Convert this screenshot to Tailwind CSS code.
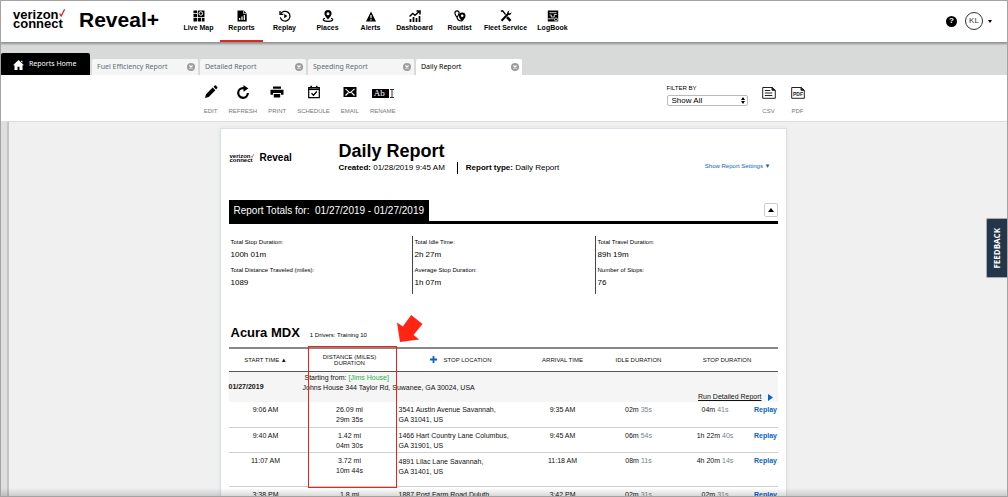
<!DOCTYPE html>
<html lang="en">
  <head>
    <meta charset="UTF-8" />
    <title>Reveal+ | Daily Report</title>
    <meta name="viewport" content="width=device-width, initial-scale=1.0" />
    <script src="https://cdn.jsdelivr.net/npm/@tailwindcss/browser@4"></script>
  </head>
  <body class="relative h-screen flex flex-col overflow-hidden border border-[#a3a3a3] bg-[#f0f0f0] font-['Liberation_Sans',Arial,sans-serif] text-black">
    <!-- Header -->
    <header class="relative z-10 flex shrink-0 h-[41px] bg-white shadow-[0_1px_2px_1px_#8f9190]">
      <a href="#" class="block ml-3 mt-[9px] w-[66px] text-[13px] leading-[9px] font-bold">
        <span class="flex items-start">verizon
          <svg class="w-[6px] h-[8px] -mt-px" viewBox="0 0 6 8" fill="none" stroke="#e0261c" stroke-width="1.3"><path d="M.6 4.6 2.2 7 5.6.4" /></svg>
        </span>
        <span class="block">connect</span>
      </a>
      <h1 class="w-[98px] mt-[7px] text-[21px] leading-6 font-bold">Reveal+</h1>

      <nav class="flex text-[7px] leading-2 font-bold text-center">
        <a href="#" class="flex flex-col items-center w-[43px] pt-[9px] gap-[2px] whitespace-nowrap">
          <svg class="size-3" viewBox="0 0 12 12"><path d="M.5.5h11v11H.5z" /><path d="M0 7.5h12M4.5 0v12M8.5 7.5V12M0 3.5h4" stroke="#fff" stroke-width=".8" /><circle cx="7.8" cy="3.5" r="1.8" fill="none" stroke="#fff" /></svg>
          Live Map
        </a>
        <a href="#" aria-current="page" class="flex flex-col items-center w-[43px] pt-[9px] gap-[2px] whitespace-nowrap border-b-2 border-[#dc2a20]">
          <svg class="size-3" viewBox="0 0 12 12"><path d="M1.5.5h6.3l2.9 2.9v8.1H1.5z" /><path d="M7.6.6v3h3" fill="none" stroke="#fff" stroke-width=".7" /><path d="M3.7 10V8M6 10V6.5M8.3 10V5" stroke="#fff" stroke-width="1.2" /></svg>
          Reports
        </a>
        <a href="#" class="flex flex-col items-center w-[43px] pt-[9px] gap-[2px] whitespace-nowrap">
          <svg class="size-3" viewBox="0 0 12 12" fill="none" stroke="#000" stroke-width="1.3"><path d="M1.6 4.2a4.9 4.9 0 1 1-.3 3.2" /><path d="M1 1v3.4h3.4" /><path d="M5.2 4v4.2l3.2-2.1z" fill="#000" stroke="none" /></svg>
          Replay
        </a>
        <a href="#" class="flex flex-col items-center w-[43px] pt-[9px] gap-[2px] whitespace-nowrap">
          <svg class="size-3" viewBox="0 0 12 12"><path fill-rule="evenodd" d="M6 0a3.6 3.6 0 0 1 3.6 3.6C9.600 6 6 9.500 6 9.500S2.400 6 2.400 3.600A3.600 3.600 0 0 1 6 0zm0 2.200a1.500 1.500 0 1 0 0 3 1.500 1.500 0 0 0 0-3z" /><path d="M3 8.200C-.5 9.400 1.500 11.400 6 11.400s6.500-2 3-3.200" fill="none" stroke="#000" stroke-width="1.100" /></svg>
          Places
        </a>
        <a href="#" class="flex flex-col items-center w-[43px] pt-[9px] gap-[2px] whitespace-nowrap">
          <svg class="size-3" viewBox="0 0 12 12"><path d="M6 1.500 11 11.500H1z" /><path d="M6 5v3.300M6 9.200v1.200" stroke="#fff" stroke-width="1.200" /></svg>
          Alerts
        </a>
        <a href="#" class="flex flex-col items-center w-[45px] pt-[9px] gap-[2px] whitespace-nowrap">
          <svg class="size-3" viewBox="0 0 12 12"><path d="M.5 6.500 3.800 3.500 6 5.300 10.500 1.300M7.500 1h3.500v3.500" fill="none" stroke="#000" stroke-width="1.500" /><path d="M1.500 12V9M4.500 12V7M7.500 12V8M10.500 12V6" stroke="#000" stroke-width="1.700" /></svg>
          Dashboard
        </a>
        <a href="#" class="flex flex-col items-center w-[45px] pt-[9px] gap-[2px] whitespace-nowrap">
          <svg class="size-3" viewBox="0 0 12 12"><path d="M3 7.500C1.500 5.500.9 4 .9 3a2.100 2.100 0 0 1 4.200 0c0 1-.6 2.500-2.100 4.500zM3 7c.2 3 2 4 5 4" fill="none" stroke="#000" stroke-width="1.200" /><path fill-rule="evenodd" d="M8.200 2.500a3.300 3.300 0 0 1 3.300 3.300c0 2.400-3.300 5.700-3.300 5.700S4.900 8.200 4.900 5.800a3.300 3.300 0 0 1 3.300-3.300zm0 2a1.300 1.300 0 1 0 0 2.600 1.300 1.300 0 0 0 0-2.600z" /></svg>
          Routist
        </a>
        <a href="#" class="flex flex-col items-center w-[47px] pt-[9px] gap-[2px] whitespace-nowrap">
          <svg class="size-3" viewBox="0 0 12 12" fill="none" stroke="#000"><path d="M1.500 10.800 8.500 3.500" stroke-width="2" /><path d="M11.500 2.300 9.700 3.500 8.500 2.300 9.600.6A2.600 2.600 0 0 0 7.400 3.800L8.600 5a2.600 2.600 0 0 0 2.900-2.700z" fill="#000" stroke="none" /><path d="M.8 1.200 2.600.8 5.600 4.600" stroke-width="1.400" /><path d="M7 7.200 10.500 10.800" stroke-width="2.600" /></svg>
          Fleet Service
        </a>
        <a href="#" class="flex flex-col items-center w-[47px] pt-[9px] gap-[2px] whitespace-nowrap">
          <svg class="size-3" viewBox="0 0 12 12"><path d="M.8.500h10.400v11H.8z" /><path d="M2.500 2.700h7M2.500 5h1.800V7h3V4.500h2.500M.8 8.800h6" fill="none" stroke="#fff" stroke-width=".8" /><circle cx="9" cy="9.500" r="1.500" stroke="#fff" stroke-width=".8" /></svg>
          LogBook
        </a>
      </nav>

      <div class="flex items-center gap-2 ml-auto mr-[15px] mb-px">
        <button type="button" aria-label="Help" class="flex items-center justify-center size-[11px] rounded-full bg-black text-white text-[8px] leading-none font-bold">?</button>
        <button type="button" class="flex items-center gap-[5px]">
          <span class="flex items-center justify-center size-[18px] rounded-full border border-[#333] text-[8px] text-[#333]">KL</span>
          <svg class="w-1 h-[3px]" viewBox="0 0 4 3"><path d="M0 0h4L2 3z" /></svg>
        </button>
      </div>
    </header>

    <!-- Open tabs -->
    <div class="flex shrink-0 items-end gap-[2px] h-[33px] bg-[#d8dad9] font-['Noto_Sans','Open_Sans',sans-serif] text-[7px] text-[#5f6d75]">
      <a href="#" class="flex items-center gap-[5px] w-[89px] h-[22px] pt-px pl-3 rounded-t-xs bg-black text-white">
        <svg class="w-[11px] h-[10px]" viewBox="0 0 11 10" fill="#fff"><path d="M5.500 0 11 5.200H9.500V10h-3V6.800h-2V10h-3V5.200H0zM8 .8h1.400v2L8 1.500z" /></svg>
        Reports Home
      </a>
      <div class="flex items-center justify-between w-[106px] h-4 pl-[5px] pr-[3px] rounded-t-xs bg-[#f5f5f5]">
        <a href="#" class="pt-px">Fuel Efficiency Report</a>
        <button type="button" aria-label="Close Fuel Efficiency Report" class="size-2">
          <svg class="size-2" viewBox="0 0 8 8"><circle cx="4" cy="4" r="4" fill="#9c9c9c" /><path d="m2.500 2.500 3 3m0-3-3 3" stroke="#fff" stroke-width="1.200" /></svg>
        </button>
      </div>
      <div class="flex items-center justify-between w-[106px] h-4 pl-[5px] pr-[3px] rounded-t-xs bg-[#f5f5f5]">
        <a href="#" class="pt-px">Detailed Report</a>
        <button type="button" aria-label="Close Detailed Report" class="size-2">
          <svg class="size-2" viewBox="0 0 8 8"><circle cx="4" cy="4" r="4" fill="#9c9c9c" /><path d="m2.500 2.500 3 3m0-3-3 3" stroke="#fff" stroke-width="1.200" /></svg>
        </button>
      </div>
      <div class="flex items-center justify-between w-[106px] h-4 pl-[5px] pr-[3px] rounded-t-xs bg-[#f5f5f5]">
        <a href="#" class="pt-px">Speeding Report</a>
        <button type="button" aria-label="Close Speeding Report" class="size-2">
          <svg class="size-2" viewBox="0 0 8 8"><circle cx="4" cy="4" r="4" fill="#9c9c9c" /><path d="m2.500 2.500 3 3m0-3-3 3" stroke="#fff" stroke-width="1.200" /></svg>
        </button>
      </div>
      <div class="flex items-center justify-between w-[106px] h-4 pl-[5px] pr-[3px] rounded-t-xs bg-white text-black">
        <a href="#" aria-current="page" class="pt-px">Daily Report</a>
        <button type="button" aria-label="Close Daily Report" class="size-2">
          <svg class="size-2" viewBox="0 0 8 8"><circle cx="4" cy="4" r="4" fill="#9c9c9c" /><path d="m2.500 2.500 3 3m0-3-3 3" stroke="#fff" stroke-width="1.200" /></svg>
        </button>
      </div>
    </div>

    <!-- Toolbar -->
    <div class="shrink-0 h-[47px] border-b border-[#dcdcdc] bg-white">
      <div class="flex justify-between max-w-[601px] mx-auto pt-[10px] text-[6px] leading-2 text-[#777]">
        <div class="flex gap-[11px]">
          <button type="button" class="flex flex-col items-center gap-2">
            <svg class="size-[14px]" viewBox="0 0 14 14"><path d="M1 13 2 9.300 8.700 2.600l2.700 2.700L4.700 12zM9.500 1.800 10.800.6q.6-.5 1.200 0l1.300 1.300q.5.600 0 1.200l-1.200 1.300z" /></svg>
            EDIT
          </button>
          <button type="button" class="flex flex-col items-center gap-2">
            <svg class="size-[14px]" viewBox="0 0 14 14"><path d="M11.800 8A4.800 4.800 0 1 1 7 3.200h1" fill="none" stroke="#000" stroke-width="2.200" /><path d="M7.500 0 12.300 3.400 7.500 6.800z" /></svg>
            REFRESH
          </button>
          <button type="button" class="flex flex-col items-center gap-2">
            <svg class="size-[14px]" viewBox="0 0 14 14"><path d="M3 1.500h8v2.300H3zM.5 4.700h13v5H11V8H3v1.700H.5zM3.800 9h6.400v3.500H3.800z" /></svg>
            PRINT
          </button>
          <button type="button" class="flex flex-col items-center gap-2">
            <svg class="size-[14px]" viewBox="0 0 14 14" fill="none" stroke="#000"><path d="M1.700 2.700h10.600v10H1.700z" stroke-width="1.200" /><path d="M1.500 4.300h11" stroke-width="1.600" /><path d="M4.200.8v2.400M9.800.8v2.400" stroke-width="1.600" /><path d="m4.500 8.300 2 2 3.300-3.800" stroke-width="1.400" /></svg>
            SCHEDULE
          </button>
          <button type="button" class="flex flex-col items-center gap-2">
            <svg class="size-[14px]" viewBox="0 0 14 14"><path d="M.5 2h13v10H.5z" /><path d="m2.500 3.800 4.500 4 4.500-4M2.500 10.500l3-3M11.500 10.500l-3-3" fill="none" stroke="#fff" stroke-width="1.100" /></svg>
            EMAIL
          </button>
          <button type="button" class="flex flex-col items-center gap-2">
            <span class="flex items-center gap-[1px] h-[14px] pt-[3px]">
              <span class="w-[17px] h-[9px] pl-[2px] bg-black text-white text-[9px] leading-[9px] text-left font-['Liberation_Serif',serif]">Ab</span>
              <svg class="w-1 h-[9px]" viewBox="0 0 4 9" fill="none" stroke="#333"><path d="M0 .5h4M0 8.500h4M2 0v9" /></svg>
            </span>
            RENAME
          </button>
        </div>
        <div class="flex">
          <div class="mr-[14px]">
            <label for="filter" class="block text-black leading-[6px]">FILTER BY</label>
            <div class="relative mt-1">
              <select id="filter" class="block appearance-none w-[81px] h-[11px] pl-1 rounded-xs border border-[#bbb] bg-white text-[8px] leading-[9px] text-black">
                <option>Show All</option>
              </select>
              <svg class="absolute right-[3px] top-[2px] w-1 h-[7px] pointer-events-none" viewBox="0 0 4 7"><path d="M0 3 2 0l2 3zM0 4h4L2 7z" /></svg>
            </div>
          </div>
          <button type="button" class="flex flex-col items-center gap-2 mr-[15px]">
            <svg class="size-[14px]" viewBox="0 0 14 14" fill="none" stroke="#222"><path d="M.7 2.500h9.300l3.300 2.800v8H.7z" /><path d="M10 2.500v2.800h3.300z" fill="#222" /><path d="M2.800 5.500h5.500M2.800 8h7.500M2.800 10.500h7.500" /></svg>
            CSV
          </button>
          <button type="button" class="flex flex-col items-center gap-2">
            <svg class="size-[14px]" viewBox="0 0 14 14" fill="none" stroke="#222"><path d="M.7 2.500h9.300l3.300 2.800v8H.7z" /><path d="M10 2.500v2.800h3.300z" fill="#222" /><text x="7" y="11" text-anchor="middle" font-size="5" font-weight="700" fill="#222" stroke="none">PDF</text></svg>
            PDF
          </button>
        </div>
      </div>
    </div>

    <!-- Report -->
    <div class="flex flex-1 min-h-0">
      <div class="shrink-0 w-2 border-r-2 border-[#c4c4c4] bg-[#dfdfdf]"></div>
      <main class="flex-1 pt-[6px] pr-[10px] overflow-hidden">
        <article class="max-w-[567px] mx-auto px-2 border border-[#d8dfe6] bg-white shadow-[0_0_3px_#dde2e8]">
          <div class="flex items-start pt-3">
            <div class="flex items-center gap-[6px] w-[110px] pt-[11px] pl-px">
              <span class="text-[6px] leading-1 font-bold">
                <span class="flex">verizon<svg class="w-[3px] h-1" viewBox="0 0 6 8" fill="none" stroke="#e0261c" stroke-width="1.500"><path d="M.6 4.600 2.200 7 5.600.4" /></svg></span>
                connect
              </span>
              <span class="text-[10px] leading-3 font-bold">Reveal</span>
            </div>
            <div>
              <h2 class="text-[18px] leading-5 font-bold">Daily Report</h2>
              <div class="flex items-center pt-px text-[8px] leading-3">
                <p><b>Created:</b> 01/28/2019 9:45 AM</p>
                <p class="ml-3 pl-2 border-l border-black"><b>Report type:</b> Daily Report</p>
              </div>
            </div>
            <button type="button" class="ml-auto mr-[7px] mt-[21px] text-[6px] leading-2 text-[#0b63c4]">Show Report Settings ▼</button>
          </div>

          <section>
            <div class="flex items-end justify-between mt-[26px] border-b-3 border-black">
              <h3 class="h-[21px] px-[5px] bg-black text-white text-[10px] leading-[21px] whitespace-pre">Report Totals for:  01/27/2019 - 01/27/2019</h3>
              <button type="button" aria-label="Collapse totals" class="flex items-center justify-center size-[14px] mb-1 border border-[#ccc] rounded-xs">
                <svg class="w-[6px] h-1" viewBox="0 0 6 4"><path d="M0 4h6L3 0z" /></svg>
              </button>
            </div>
            <div class="grid grid-cols-3 mt-3 text-[6px] leading-[10px]">
              <dl class="h-[58px] pt-px pl-[2px]">
                <dt>Total Stop Duration:</dt>
                <dd class="mt-[2px] text-[8px] leading-3">100h 01m</dd>
                <dt class="mt-1">Total Distance Traveled (miles):</dt>
                <dd class="mt-[2px] text-[8px] leading-3">1089</dd>
              </dl>
              <dl class="h-[58px] pt-px pl-[2px] border-l border-[#444]">
                <dt>Total Idle Time:</dt>
                <dd class="mt-[2px] text-[8px] leading-3">2h 27m</dd>
                <dt class="mt-1">Average Stop Duration:</dt>
                <dd class="mt-[2px] text-[8px] leading-3">1h 07m</dd>
              </dl>
              <dl class="h-[58px] pt-px pl-[2px] border-l border-[#444]">
                <dt>Total Travel Duration:</dt>
                <dd class="mt-[2px] text-[8px] leading-3">89h 19m</dd>
                <dt class="mt-1">Number of Stops:</dt>
                <dd class="mt-[2px] text-[8px] leading-3">76</dd>
              </dl>
            </div>
          </section>

          <section>
            <div class="flex items-baseline gap-[10px] mt-[31px] pl-[2px]">
              <h3 class="text-[13px] leading-4 font-bold">Acura MDX</h3>
              <p class="text-[6px]">1 Drivers: Training 10</p>
            </div>
            <div class="relative mt-[6px]">
              <table class="w-full table-fixed border-collapse text-[7px] leading-[10px] text-[#111]">
                <colgroup>
                  <col class="w-[74px]" /><col class="w-[94px]" /><col /><col class="w-[76px]" /><col class="w-[76px]" /><col class="w-[77px]" /><col class="w-[24px]" />
                </colgroup>
                <thead>
                  <tr class="h-[23px] border-t-2 border-b border-t-[#888] border-b-[#555] text-[6px] leading-[6px]">
                    <th class="font-normal">START TIME ▲</th>
                    <th class="font-normal">DISTANCE (MILES)<br />DURATION</th>
                    <th class="font-normal">
                      <span class="flex items-center gap-[7px] pl-[33px]">
                        <svg class="size-[7px]" viewBox="0 0 7 7" stroke="#0b63c4" stroke-width="1.800"><path d="M3.500 0v7M0 3.500h7" /></svg>
                        STOP LOCATION
                      </span>
                    </th>
                    <th class="font-normal">ARRIVAL TIME</th>
                    <th class="font-normal">IDLE DURATION</th>
                    <th class="font-normal" colspan="2">STOP DURATION</th>
                  </tr>
                </thead>
                <tbody class="text-center">
                  <tr class="h-[31px] bg-[#f5f5f5]">
                    <th class="text-left">01/27/2019</th>
                    <td colspan="3" class="pt-px text-left align-top">
                      <p class="pl-[2px]">Starting from: <span class="text-[#2bb24c]">[Jims House]</span></p>
                      <p>Johns House 344 Taylor Rd, Suwanee, GA 30024, USA</p>
                    </td>
                    <td colspan="3" class="pb-px align-bottom">
                      <a href="#" class="flex items-center justify-end gap-[6px] pr-[5px] leading-2 underline">Run Detailed Report
                        <svg class="w-[5px] h-[7px]" viewBox="0 0 5 7"><path d="M0 0v7l5-3.500z" fill="#0b63c4" /></svg>
                      </a>
                    </td>
                  </tr>
                  <tr class="h-[25px] align-top border-b border-[#d0d0d0]">
                    <td class="pt-[3px]">9:06 AM</td>
                    <td class="pt-[3px]">26.09 mi<br />29m 35s</td>
                    <td class="pt-[3px] pl-[2px] text-left whitespace-nowrap">3541 Austin Avenue Savannah,<br />GA 31041, US</td>
                    <td class="pt-[3px]">9:35 AM</td>
                    <td class="pt-[3px]">02m <span class="text-[#7a828a]">35s</span></td>
                    <td class="pt-[3px]">04m <span class="text-[#7a828a]">41s</span></td>
                    <td class="pt-[3px]"><a href="#" class="font-bold text-[#0b63c4]">Replay</a></td>
                  </tr>
                  <tr class="h-[25px] align-top border-b border-[#d0d0d0]">
                    <td class="pt-[3px]">9:40 AM</td>
                    <td class="pt-[3px]">1.42 mi<br />04m 30s</td>
                    <td class="pt-[3px] pl-[2px] text-left whitespace-nowrap">1466 Hart Country Lane Columbus,<br />GA 31901, US</td>
                    <td class="pt-[3px]">9:45 AM</td>
                    <td class="pt-[3px]">06m <span class="text-[#7a828a]">54s</span></td>
                    <td class="pt-[3px]">1h 22m <span class="text-[#7a828a]">40s</span></td>
                    <td class="pt-[3px]"><a href="#" class="font-bold text-[#0b63c4]">Replay</a></td>
                  </tr>
                  <tr class="h-[34px] align-top border-b border-[#d0d0d0]">
                    <td class="pt-[3px]">11:07 AM</td>
                    <td class="pt-[3px]">3.72 mi<br />10m 44s</td>
                    <td class="pt-1 pl-[2px] text-left whitespace-nowrap">4891 Lilac Lane Savannah,<br />GA 31401, US</td>
                    <td class="pt-[3px]">11:18 AM</td>
                    <td class="pt-[3px]">08m <span class="text-[#7a828a]">11s</span></td>
                    <td class="pt-[3px]">4h 20m <span class="text-[#7a828a]">14s</span></td>
                    <td class="pt-[3px]"><a href="#" class="font-bold text-[#0b63c4]">Replay</a></td>
                  </tr>
                  <tr class="h-[25px] align-top border-b border-[#d0d0d0]">
                    <td class="pt-[3px]">3:38 PM</td>
                    <td class="pt-[3px]">1.8 mi</td>
                    <td class="pt-[3px] pl-[2px] text-left whitespace-nowrap">1887 Post Farm Road Duluth,</td>
                    <td class="pt-[3px]">3:42 PM</td>
                    <td class="pt-[3px]">02m <span class="text-[#7a828a]">31s</span></td>
                    <td class="pt-[3px]">02m <span class="text-[#7a828a]">31s</span></td>
                    <td class="pt-[3px]"><a href="#" class="font-bold text-[#0b63c4]">Replay</a></td>
                  </tr>
                </tbody>
              </table>
              <!-- Callout on the distance column -->
              <div class="absolute z-10 left-[79px] -top-px w-[89px] h-[142px] border-[1px] border-solid border-red-600 outline-1 -outline-offset-1 outline-[#ff1a10] pointer-events-none"></div>
              <svg class="absolute left-[168px] -top-8 w-[26px] h-[27px] pointer-events-none" viewBox="0 0 26 27"><path d="M3 27 0 7.500 5.800 11.500 14.200 0l11.300 9-9 11 5.700 4.500z" fill="#ff2414" /></svg>
            </div>
          </section>
        </article>
      </main>
    </div>

    <div class="absolute inset-x-0 bottom-0 h-2 bg-gradient-to-t from-black/15 to-transparent pointer-events-none"></div>
    <button type="button" class="absolute right-0 top-[217px] flex items-center justify-center w-[21px] h-[60px] rounded-l-xs border border-r-0 border-[#aaa] bg-[#24364a] text-white text-[8px] font-bold font-['Open_Sans',sans-serif]">
      <span class="[writing-mode:vertical-rl] rotate-180">FEEDBACK</span>
    </button>
  </body>
</html>
